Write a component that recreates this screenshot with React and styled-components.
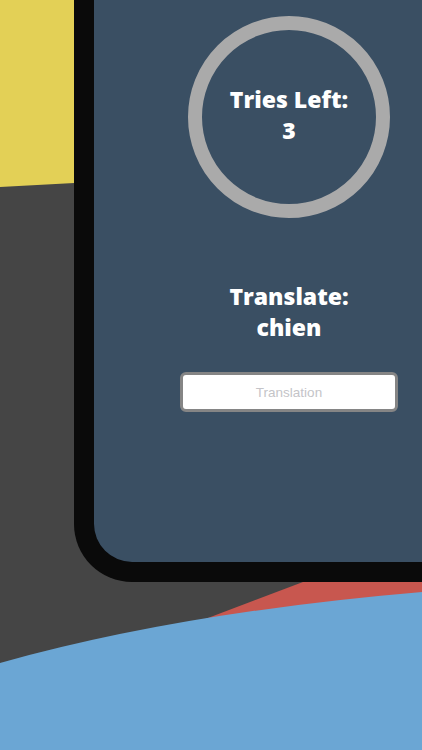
import styled, { createGlobalStyle } from "styled-components";

const Global = createGlobalStyle`
    html, body {
        margin: 0;
        padding: 0;
        background: #454545;
        overflow: hidden;
    }
    * { box-sizing: border-box; }
`;

const Stage = styled.div`
    width: 422px;
    height: 750px;
    overflow: hidden;
    display: grid;
    background: #454545;
    > * { grid-area: 1 / 1; }
`;

const Backdrop = styled.svg`
    width: 422px;
    height: 750px;
    display: block;
`;

const Phone = styled.div`
    align-self: start;
    margin-left: 74px;
    width: 430px;
    height: 582px;
    background: #0a0a0a;
    border: 20px solid #0a0a0a;
    border-top: none;
    border-radius: 0 0 58px 58px;
`;

const Screen = styled.div`
    height: 100%;
    background: #3a4f63;
    border-radius: 0 0 38px 38px;
    display: flex;
    flex-direction: column;
    align-items: center;
    padding-top: 16px;
`;

const Ring = styled.div`
    width: 202px;
    height: 202px;
    border-radius: 50%;
    border: 14px solid #aaaaaa;
    display: flex;
    flex-direction: column;
    align-items: center;
    justify-content: center;
    padding-bottom: 4px;
`;

const Heading = styled.div`
    font-family: "Open Sans", "Noto Sans", sans-serif;
    font-weight: 800;
    font-size: ${p => p.size || 23}px;
    line-height: 31px;
    color: #ffffff;
    text-align: center;
`;

const Prompt = styled.div`
    margin-top: 63px;
    display: flex;
    flex-direction: column;
    align-items: center;
`;

const Field = styled.input`
    margin-top: 29px;
    width: 218px;
    height: 40px;
    border: 3px solid #858585;
    border-radius: 6px;
    background: #ffffff;
    text-align: center;
    font-family: "Liberation Sans", Arial, sans-serif;
    font-size: 13.5px;
    outline: none;
    &::placeholder { color: #c4c4c8; }
`;

export default function App() {
    return (
        <Stage>
            <Global />
            <Backdrop viewBox="0 0 422 750">
                <polygon points="0,0 130,0 130,180 0,187" fill="#e3d056" />
                <polygon points="200,621 340,568 422,568 422,700 200,700" fill="#c8574f" />
                <path d="M0 663 Q180 612.5 422 592 L422 750 L0 750 Z" fill="#6ba6d4" />
            </Backdrop>
            <Phone>
                <Screen>
                    <Ring>
                        <Heading>Tries Left:</Heading>
                        <Heading>3</Heading>
                    </Ring>
                    <Prompt>
                        <Heading>Translate:</Heading>
                        <Heading>chien</Heading>
                    </Prompt>
                    <Field placeholder="Translation" />
                </Screen>
            </Phone>
        </Stage>
    );
}
